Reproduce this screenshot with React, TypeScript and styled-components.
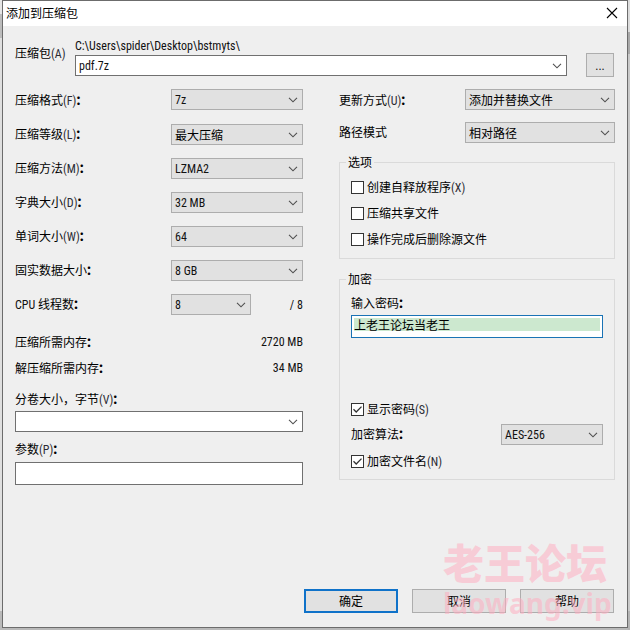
import React from "react";
import styled, { createGlobalStyle } from "styled-components";

const Global = createGlobalStyle`
  * { box-sizing: border-box; }
  html, body { margin: 0; padding: 0; overflow: hidden; }
  body {
    font-family: "Noto Sans CJK SC", sans-serif;
    font-size: 12px;
    line-height: 16px;
    color: #000;
  }
  button, input { font: inherit; color: inherit; }
`;

const Desktop = styled.div`
  position: relative;
  width: 630px;
  height: 630px;
  padding-left: 2px;
  overflow: hidden;
  background:
    linear-gradient(#dcdcdc 0 32px, #a9a9a9 32px 54px, #c9c9c9 54px 611px, #b4b4b4 611px) right / 2px 100% no-repeat,
    linear-gradient(#e6e6e6 0 14px, #bcbcbc 14px 38px, #dfdfdf 38px 611px, #b9b9b9 611px);
`;

const Dialog = styled.main`
  display: flex;
  flex-direction: column;
  width: 626px;
  height: 628px;
  border: 1px solid #6c6c6c;
  background: #efefef;
`;

const TitleBar = styled.header`
  display: flex;
  align-items: center;
  justify-content: space-between;
  flex: none;
  height: 25px;
  padding: 0 9px 2px 3px;
  background: #fff;
`;

const CloseButton = styled.button`
  display: flex;
  padding: 0;
  border: 0;
  background: none;
`;

const ArchiveRow = styled.section`
  display: grid;
  grid-template-columns: 60px 492px 47px;
  height: 63px;
  padding: 11px 0 0 12px;
`;

const ArchiveLabel = styled.div`
  padding-top: 8px;
`;

const ArchiveField = styled.div`
  display: flex;
  flex-direction: column;
`;

const PathText = styled.div`
  height: 18px;
`;

const BrowseSlot = styled.div`
  padding: 16px 0 0 19px;
`;

const Latin = styled.span<{ $dim?: boolean }>`
  font-family: "Roboto", sans-serif;
  font-size: 12px;
  font-stretch: ${(p) => (p.$dim ? "78%" : "83%")};
  white-space: pre;
  color: ${(p) => (p.$dim ? "#2b2b33" : "#111")};
`;

const Colon = styled.span`
  margin-left: -1px;
  font-weight: 800;
`;

const Columns = styled.div`
  display: flex;
  gap: 36px;
  height: 499px;
  padding: 0 12px;
`;

const LeftColumn = styled.section`
  width: 288px;
`;

const RightColumn = styled.section`
  width: 276px;
`;

const FieldRow = styled.div<{ $height: number }>`
  display: flex;
  align-items: flex-start;
  justify-content: space-between;
  height: ${(p) => p.$height}px;
`;

const Label = styled.label<{ $top?: number }>`
  display: block;
  white-space: nowrap;
  padding-top: ${(p) => p.$top ?? 3}px;
`;

const ComboBox = styled.div<{ $width: number; $light?: boolean }>`
  display: flex;
  align-items: center;
  justify-content: space-between;
  flex: none;
  width: ${(p) => p.$width}px;
  height: 21px;
  padding: 0 4px 0 3px;
  border: 1px solid ${(p) => (p.$light ? "#707070" : "#adadad")};
  background: ${(p) => (p.$light ? "#fff" : "#e1e1e1")};
`;

const ThreadPicker = styled.div`
  display: flex;
  justify-content: space-between;
  width: 132px;
`;

const Stat = styled.div`
  display: flex;
  justify-content: space-between;
  height: 26px;
`;

const TextField = styled.input`
  display: block;
  width: 288px;
  height: 23px;
  padding: 0 3px;
  border: 1px solid #707070;
  border-radius: 0;
  background: #fff;
`;

const Group = styled.fieldset<{ $height: number; $gap: number }>`
  min-width: 0;
  height: ${(p) => p.$height}px;
  margin: 0 0 ${(p) => p.$gap}px;
  padding: 0 11px;
  border: 1px solid #dadada;
`;

const Legend = styled.legend`
  height: 16px;
  margin-left: -5px;
  padding: 0 2px;
`;

const OptionList = styled.div`
  padding-top: 4px;
`;

const AlgorithmSlot = styled.div`
  padding-top: 2px;
`;

const CheckRow = styled.label`
  display: flex;
  align-items: center;
  gap: 3px;
  height: 26px;
  white-space: nowrap;
`;

const CheckFrame = styled.span`
  display: flex;
  align-items: center;
  justify-content: center;
  width: 13px;
  height: 13px;
  border: 1px solid #333;
  background: #fff;
`;

const PasswordField = styled.div`
  width: 252px;
  height: 23px;
  margin-bottom: 58px;
  padding: 2px;
  border: 1px solid #1a73b5;
  background: #fff;
`;

const PasswordValue = styled.div`
  height: 13px;
  line-height: 14px;
  background: #cce8cf;
`;

const Footer = styled.footer`
  display: flex;
  gap: 14px;
  padding: 1px 0 0 301px;
`;

const PushButton = styled.button<{ $width: number; $primary?: boolean }>`
  width: ${(p) => p.$width}px;
  height: 24px;
  padding: 0;
  border: ${(p) => (p.$primary ? "2px solid #0f72c9" : "1px solid #adadad")};
  background: #e1e1e1;
  text-align: center;
  line-height: 16px;
`;

const Watermark = styled.div`
  position: absolute;
  left: 443px;
  top: 538px;
  font-weight: 700;
  color: rgba(255, 174, 192, 0.55);
  white-space: nowrap;
  pointer-events: none;
`;

const WatermarkName = styled.div`
  font-size: 41px;
  font-weight: 900;
  line-height: 46px;
`;

const WatermarkSite = styled.div`
  font-family: "Noto Sans", sans-serif;
  font-size: 28px;
  line-height: 38px;
`;

const Chevron = () => (
  <svg width="10" height="6" viewBox="0 0 10 6" fill="none" stroke="#505050" strokeWidth="1.1">
    <path d="M1 .8 5 4.8 9 .8" />
  </svg>
);

const isLatin = (s: string) => /^[\x20-\x7e]+$/.test(s);

function Mixed({ text }: { text: string }) {
  return (
    <>
      {text.split(/([\x20-\x7e]+|：)/).map((part, i) => {
        if (part === "：") return <Colon key={i}>{part}</Colon>;
        if (isLatin(part)) return <Latin key={i} $dim={part.startsWith("(")}>{part}</Latin>;
        return part;
      })}
    </>
  );
}

function Combo({ value, width = 132, light }: { value: string; width?: number; light?: boolean }) {
  return (
    <ComboBox $width={width} $light={light}>
      <span><Mixed text={value} /></span>
      <Chevron />
    </ComboBox>
  );
}

function Check({ text, checked }: { text: string; checked?: boolean }) {
  return (
    <CheckRow>
      <CheckFrame>
        {checked && (
          <svg width="11" height="11" viewBox="0 0 11 11" fill="none" stroke="#333" strokeWidth="1.3">
            <path d="M1.5 5.3 4.2 8 9.5 2.6" />
          </svg>
        )}
      </CheckFrame>
      <span><Mixed text={text} /></span>
    </CheckRow>
  );
}

const settings = [
  ["压缩格式(F)：", "7z"],
  ["压缩等级(L)：", "最大压缩"],
  ["压缩方法(M)：", "LZMA2"],
  ["字典大小(D)：", "32 MB"],
  ["单词大小(W)：", "64"],
  ["固实数据大小：", "8 GB"],
];

export default function App() {
  return (
    <Desktop>
      <Global />
      <Dialog>
        <TitleBar>
          <span>添加到压缩包</span>
          <CloseButton aria-label="关闭">
            <svg width="12" height="12" viewBox="0 0 12 12" stroke="#000" strokeWidth="1.1">
              <path d="M1 1 11 11M11 1 1 11" />
            </svg>
          </CloseButton>
        </TitleBar>
        <ArchiveRow>
          <ArchiveLabel><Mixed text="压缩包(A)" /></ArchiveLabel>
          <ArchiveField>
            <PathText><Latin>{"C:\\Users\\spider\\Desktop\\bstmyts\\"}</Latin></PathText>
            <Combo value="pdf.7z" width={492} light />
          </ArchiveField>
          <BrowseSlot><PushButton $width={28}><Latin>...</Latin></PushButton></BrowseSlot>
        </ArchiveRow>
        <Columns>
          <LeftColumn>
            {settings.map(([label, value], i) => (
              <FieldRow key={label} $height={i === 0 ? 35 : 34}>
                <Label $top={i === 0 ? 3 : 2}><Mixed text={label} /></Label>
                <Combo value={value} />
              </FieldRow>
            ))}
            <FieldRow $height={40}>
              <Label $top={2}><Mixed text="CPU 线程数：" /></Label>
              <ThreadPicker>
                <Combo value="8" width={80} />
                <Label $top={2}><Latin>/ 8</Latin></Label>
              </ThreadPicker>
            </FieldRow>
            <Stat><span><Mixed text="压缩所需内存：" /></span><Latin>2720 MB</Latin></Stat>
            <Stat><span><Mixed text="解压缩所需内存：" /></span><Latin>34 MB</Latin></Stat>
            <FieldRow $height={25}><Label $top={5}><Mixed text="分卷大小，字节(V)：" /></Label></FieldRow>
            <Combo value="" width={288} light />
            <FieldRow $height={30}><Label $top={9}><Mixed text="参数(P)：" /></Label></FieldRow>
            <TextField />
          </LeftColumn>
          <RightColumn>
            <FieldRow $height={33}>
              <Label><Mixed text="更新方式(U)：" /></Label>
              <Combo value="添加并替换文件" width={150} />
            </FieldRow>
            <FieldRow $height={32}>
              <Label $top={2}>路径模式</Label>
              <Combo value="相对路径" width={150} />
            </FieldRow>
            <Group $height={105} $gap={12}>
              <Legend>选项</Legend>
              <OptionList>
                <Check text="创建自释放程序(X)" />
                <Check text="压缩共享文件" />
                <Check text="操作完成后删除源文件" />
              </OptionList>
            </Group>
            <Group $height={209} $gap={0}>
              <Legend>加密</Legend>
              <FieldRow $height={28}><Label $top={8}><Mixed text="输入密码：" /></Label></FieldRow>
              <PasswordField><PasswordValue>上老王论坛当老王</PasswordValue></PasswordField>
              <Check text="显示密码(S)" checked />
              <FieldRow $height={26}>
                <Label $top={4}><Mixed text="加密算法：" /></Label>
                <AlgorithmSlot><Combo value="AES-256" width={102} /></AlgorithmSlot>
              </FieldRow>
              <Check text="加密文件名(N)" checked />
            </Group>
          </RightColumn>
        </Columns>
        <Footer>
          <PushButton $width={94} $primary>确定</PushButton>
          <PushButton $width={94}>取消</PushButton>
          <PushButton $width={94}>帮助</PushButton>
        </Footer>
      </Dialog>
      <Watermark>
        <WatermarkName>老王论坛</WatermarkName>
        <WatermarkSite>laowang.vip</WatermarkSite>
      </Watermark>
    </Desktop>
  );
}
